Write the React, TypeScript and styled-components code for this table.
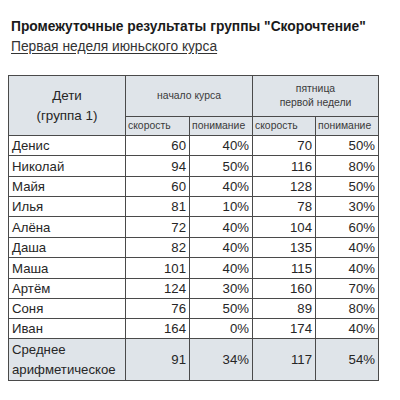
import React from "react";
import styled, { createGlobalStyle } from "styled-components";

const Global = createGlobalStyle`
  html, body { margin: 0; padding: 0; background: #ffffff; }
  body { font-family: "Liberation Sans", Arial, sans-serif; color: #222; }
`;

const Page = styled.div`
  width: 400px;
  height: 400px;
  padding: 0 0 0 8px;
  box-sizing: border-box;
  overflow: hidden;
`;

const Title = styled.h1`
  margin: 0;
  padding: 19px 0 0 3px;
  font-size: 13.8px;
  line-height: 15px;
  font-weight: bold;
  color: #1a1a1a;
  white-space: nowrap;
`;

const Subtitle = styled.div`
  padding: 5px 0 0 3px;
  font-size: 13.8px;
  line-height: 15px;
  color: #333;
  text-decoration: underline;
  text-underline-offset: 2px;
`;

const Table = styled.table`
  margin-top: 21px;
  border-collapse: collapse;
  table-layout: fixed;
  width: 371px;
  border: 1px solid #3a3a3a;
  font-size: 13.2px;
  color: #262626;
`;

const HeadCell = styled.th<{ $small?: boolean; $left?: boolean }>`
  background: #dfe4e9;
  border: 1px solid #4a4a4a;
  font-weight: normal;
  padding: 0 2px;
  font-size: ${(p) => (p.$small ? "10.4px" : "13.4px")};
  line-height: ${(p) => (p.$small ? "14px" : "20px")};
  color: ${(p) => (p.$small ? "#3a3a3a" : "#262626")};
  text-align: ${(p) => (p.$left ? "left" : "center")};
  vertical-align: middle;
`;

const Row = styled.tr<{ $h: number }>`
  height: ${(p) => p.$h}px;
`;

const NameCell = styled.td`
  border: 1px solid #4a4a4a;
  padding: 0 3px;
  text-align: left;
  line-height: 15px;
`;

const NumCell = styled.td`
  border: 1px solid #4a4a4a;
  padding: 0 3px;
  text-align: right;
  line-height: 15px;
`;

const FootName = styled(NameCell)`
  background: #dfe4e9;
  line-height: 20px;
`;

const FootNum = styled(NumCell)`
  background: #dfe4e9;
`;

const rows: [string, string, string, string, string][] = [
  ["Денис", "60", "40%", "70", "50%"],
  ["Николай", "94", "50%", "116", "80%"],
  ["Майя", "60", "40%", "128", "50%"],
  ["Илья", "81", "10%", "78", "30%"],
  ["Алёна", "72", "40%", "104", "60%"],
  ["Даша", "82", "40%", "135", "40%"],
  ["Маша", "101", "40%", "115", "40%"],
  ["Артём", "124", "30%", "160", "70%"],
  ["Соня", "76", "50%", "89", "80%"],
  ["Иван", "164", "0%", "174", "40%"],
];

const heights = [20, 21, 20, 20, 21, 20, 21, 20, 20, 20];

export default function App() {
  return (
    <Page>
      <Global />
      <Title>Промежуточные результаты группы "Скорочтение"</Title>
      <Subtitle>Первая неделя июньского курса</Subtitle>
      <Table>
        <colgroup>
          <col style={{ width: 117 }} />
          <col style={{ width: 64 }} />
          <col style={{ width: 63 }} />
          <col style={{ width: 63 }} />
          <col style={{ width: 63 }} />
        </colgroup>
        <thead>
          <Row $h={41}>
            <HeadCell rowSpan={2}>
              Дети
              <br />
              (группа 1)
            </HeadCell>
            <HeadCell colSpan={2} $small>
              начало курса
            </HeadCell>
            <HeadCell colSpan={2} $small>
              пятница
              <br />
              первой недели
            </HeadCell>
          </Row>
          <Row $h={19}>
            <HeadCell $small $left>скорость</HeadCell>
            <HeadCell $small $left>понимание</HeadCell>
            <HeadCell $small $left>скорость</HeadCell>
            <HeadCell $small $left>понимание</HeadCell>
          </Row>
        </thead>
        <tbody>
          {rows.map((r, i) => (
            <Row key={r[0]} $h={heights[i]}>
              <NameCell>{r[0]}</NameCell>
              <NumCell>{r[1]}</NumCell>
              <NumCell>{r[2]}</NumCell>
              <NumCell>{r[3]}</NumCell>
              <NumCell>{r[4]}</NumCell>
            </Row>
          ))}
          <Row $h={42}>
            <FootName>
              Среднее
              <br />
              арифметическое
            </FootName>
            <FootNum>91</FootNum>
            <FootNum>34%</FootNum>
            <FootNum>117</FootNum>
            <FootNum>54%</FootNum>
          </Row>
        </tbody>
      </Table>
    </Page>
  );
}
